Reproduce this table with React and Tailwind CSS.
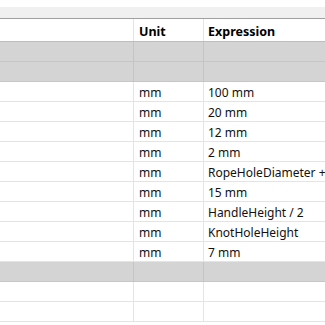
const rows = [
  { type: "group" },
  { type: "group" },
  { unit: "mm", expr: "100 mm" },
  { unit: "mm", expr: "20 mm" },
  { unit: "mm", expr: "12 mm" },
  { unit: "mm", expr: "2 mm" },
  { unit: "mm", expr: "RopeHoleDiameter + 3 mm" },
  { unit: "mm", expr: "15 mm" },
  { unit: "mm", expr: "HandleHeight / 2" },
  { unit: "mm", expr: "KnotHoleHeight" },
  { unit: "mm", expr: "7 mm" },
  { type: "group" },
  { unit: "", expr: "" },
  { unit: "", expr: "" },
];

const Row = ({ row }) => {
  if (row.type === "group") {
    return (
      <div className="flex h-[20px] bg-[#d4d4d4] border-b border-[#c6c6c6]">
        <div className="w-[134px] shrink-0 border-r border-[#c4c4c4]" />
        <div className="w-[70px] shrink-0 border-r border-[#c4c4c4]" />
        <div className="flex-1" />
      </div>
    );
  }
  return (
    <div className="flex h-[20px] bg-white border-b border-[#e4e4e4] text-[12px] text-[#111] leading-[21px]">
      <div className="w-[134px] shrink-0 border-r border-[#e4e4e4]" />
      <div className="w-[70px] shrink-0 border-r border-[#e4e4e4] pl-[5px]">
        {row.unit}
      </div>
      <div className="flex-1 pl-[4px] whitespace-nowrap overflow-hidden">
        {row.expr}
      </div>
    </div>
  );
};

export default function App() {
  return (
    <div
      className="w-[325px] h-[325px] overflow-hidden bg-white"
      style={{ fontFamily: '"Noto Sans", "DejaVu Sans", sans-serif' }}
    >
      <div className="h-[7px] bg-white" />
      <div className="h-[12px] bg-[#f0f0f0] border-b border-[#a0a0a0]" />
      <div className="flex h-[23px] bg-white border-b border-[#bdbdbd] text-[12.5px] font-bold text-black leading-[25px]">
        <div className="w-[134px] shrink-0 border-r border-[#e4e4e4]" />
        <div className="w-[70px] shrink-0 border-r border-[#e4e4e4] pl-[5px]">
          Unit
        </div>
        <div className="flex-1 pl-[4px]">Expression</div>
      </div>
      {rows.map((row, i) => (
        <Row key={i} row={row} />
      ))}
    </div>
  );
}
